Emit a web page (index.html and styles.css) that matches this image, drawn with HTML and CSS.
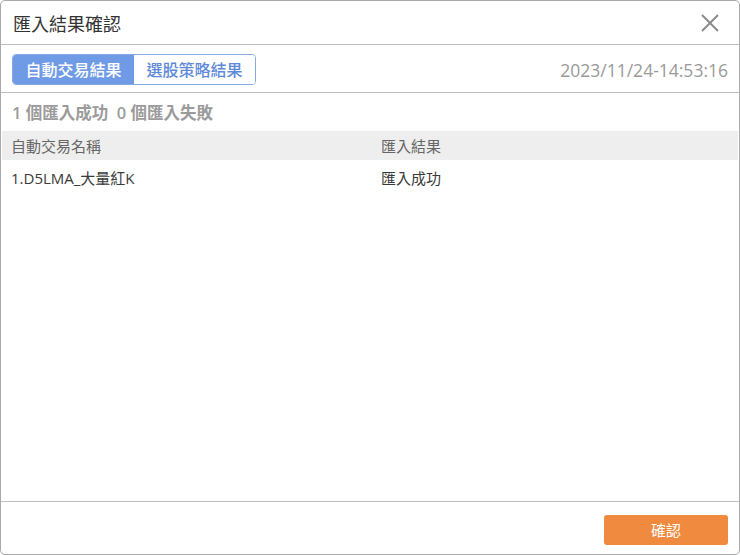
FILE: index.html
```html
<!DOCTYPE html>
<html lang="zh-Hant">
<head>
<meta charset="utf-8">
<link rel="stylesheet" href="styles.css">
</head>
<body>
<div class="dialog">
  <div class="header">
    <div class="title">匯入結果確認</div>
    <svg class="close" width="20" height="20" viewBox="0 0 20 20"><path d="M2 2 L18 18 M18 2 L2 18" stroke="#8a8a8a" stroke-width="2" fill="none"/></svg>
  </div>
  <div class="toolbar">
    <div class="tabs">
      <div class="tab active">自動交易結果</div>
      <div class="tab">選股策略結果</div>
    </div>
    <div class="date">2023/11/24-14:53:16</div>
  </div>
  <div class="summary">1 個匯入成功&nbsp;&nbsp;0 個匯入失敗</div>
  <div class="table">
    <div class="thead">
      <div class="col-name">自動交易名稱</div>
      <div class="col-res">匯入結果</div>
    </div>
    <div class="trow">
      <div class="col-name">1.D5LMA_大量紅K</div>
      <div class="col-res">匯入成功</div>
    </div>
  </div>
  <div class="footer">
    <button class="ok">確認</button>
  </div>
</div>
</body>
</html>
```

FILE: styles.css
```css
html, body {
  margin: 0;
  padding: 0;
  background: #fff;
}
body {
  font-family: "Open Sans", "Noto Sans CJK TC", sans-serif;
}
.dialog {
  width: 740px;
  height: 555px;
  box-sizing: border-box;
  border: 1px solid #a9a9a9;
  border-radius: 5px;
  display: flex;
  flex-direction: column;
  overflow: hidden;
}
.header {
  height: 43px;
  border-bottom: 1px solid #bdbdbd;
  display: flex;
  align-items: center;
  justify-content: space-between;
  padding: 0 19px 0 12px;
  flex: none;
}
.title {
  font-size: 18px;
  color: #333;
}
.close {
  display: block;
}
.toolbar {
  height: 47px;
  border-bottom: 1px solid #bdbdbd;
  display: flex;
  align-items: center;
  justify-content: space-between;
  padding: 0 11px 0 11px;
  flex: none;
}
.tabs {
  display: flex;
  border: 1px solid #86a9e6;
  border-radius: 4px;
  overflow: hidden;
  height: 29px;
  margin-top: 1px;
}
.tab {
  width: 121px;
  display: flex;
  align-items: center;
  justify-content: center;
  font-size: 16px;
  font-weight: 500;
  color: #5f8ad9;
  background: #fff;
}
.tab.active {
  background: #6f9be6;
  color: #fff;
}
.date {
  font-size: 17.5px;
  color: #9a9a9a;
  margin-top: 2px;
}
.summary {
  height: 38px;
  display: flex;
  align-items: center;
  padding-left: 11px;
  font-size: 16.5px;
  color: #9b9b9b;
  font-weight: 600;
  flex: none;
}
.table {
  flex: 1;
  padding: 0 1px;
}
.thead, .trow {
  display: flex;
  align-items: center;
  font-size: 15px;
}
.thead {
  height: 29px;
  background: #eeeeee;
  color: #666;
}
.trow {
  height: 34px;
  color: #3a3a3a;
}
.col-name {
  width: 379px;
  padding-left: 9px;
  box-sizing: border-box;
}
.col-res {
  flex: 1;
}
.footer {
  height: 52px;
  border-top: 1px solid #bdbdbd;
  display: flex;
  align-items: center;
  justify-content: flex-end;
  padding-right: 11px;
  flex: none;
}
.ok {
  width: 124px;
  height: 30px;
  border: none;
  border-radius: 3px;
  background: #ef8a3f;
  color: #fff;
  font-family: "Open Sans", "Noto Sans CJK TC", sans-serif;
  font-size: 15px;
  margin-top: 3px;
}
```
